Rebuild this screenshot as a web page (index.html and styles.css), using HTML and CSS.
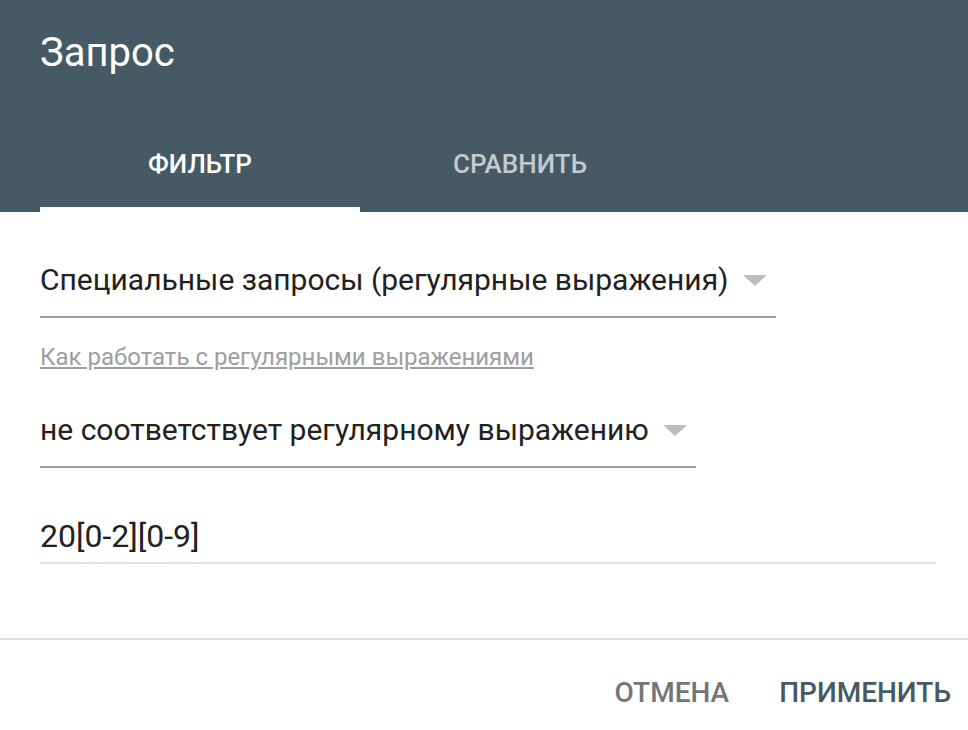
FILE: index.html
```html
<!DOCTYPE html>
<html lang="ru">
<head>
<meta charset="utf-8">
<link rel="stylesheet" href="styles.css">
</head>
<body>
<div class="dialog">
  <header class="head">
    <h1 class="title">Запрос</h1>
    <nav class="tabs">
      <div class="tab active">ФИЛЬТР</div>
      <div class="tab">СРАВНИТЬ</div>
    </nav>
  </header>
  <main class="body">
    <div class="select select-wide">
      <span class="select-text">Специальные запросы (регулярные выражения)</span>
      <span class="arrow"></span>
    </div>
    <a class="help" href="#">Как работать с регулярными выражениями</a>
    <div class="select select-narrow">
      <span class="select-text">не соответствует регулярному выражению</span>
      <span class="arrow"></span>
    </div>
    <div class="input">20[0-2][0-9]</div>
  </main>
  <footer class="actions">
    <button class="btn cancel">ОТМЕНА</button>
    <button class="btn apply">ПРИМЕНИТЬ</button>
  </footer>
</div>
</body>
</html>
```
FILE: styles.css
```css
html, body {
  margin: 0;
  padding: 0;
  background: #fff;
}
body {
  font-family: Roboto, "Noto Sans", sans-serif;
  width: 968px;
  height: 730px;
  overflow: hidden;
}
.dialog {
  display: flex;
  flex-direction: column;
}
.head {
  background: #455a64;
  height: 212px;
  display: flex;
  flex-direction: column;
  padding: 0 40px;
  box-sizing: border-box;
}
.title {
  margin: 0;
  padding-top: 29px;
  font-size: 40px;
  font-weight: 400;
  color: #fff;
  line-height: 48px;
}
.tabs {
  display: flex;
  margin-top: auto;
}
.tab {
  width: 320px;
  height: 100px;
  box-sizing: border-box;
  display: flex;
  align-items: center;
  justify-content: center;
  padding-top: 8px;
  font-size: 26px;
  font-weight: 500;
  color: rgba(255,255,255,0.7);
  border-bottom: 5px solid transparent;
}
.tab.active {
  color: #fff;
  border-bottom-color: #fff;
}
.body {
  padding: 0 32px 0 40px;
  display: flex;
  flex-direction: column;
  height: 428px;
  box-sizing: border-box;
  border-bottom: 2px solid #e0e0e0;
}
.select {
  display: flex;
  align-items: center;
  gap: 14px;
  border-bottom: 2px solid #9e9e9e;
  height: 68px;
  box-sizing: border-box;
  padding-bottom: 8px;
}
.select-wide {
  width: 736px;
  margin-top: 38px;
}
.select-narrow {
  width: 656px;
  margin-top: 29px;
}
.select-text {
  font-size: 30px;
  color: #212121;
}
.arrow {
  width: 0;
  height: 0;
  border-left: 12px solid transparent;
  border-right: 12px solid transparent;
  border-top: 11px solid #bdbdbd;
  margin-top: 2px;
}
.help {
  margin-top: 25px;
  font-size: 24px;
  color: #9e9e9e;
  text-decoration: underline;
  align-self: flex-start;
}
.input {
  margin-top: 49px;
  font-size: 32px;
  line-height: 38px;
  padding-bottom: 7px;
  color: #212121;
  border-bottom: 2px solid #e0e0e0;
  width: 896px;
}
.actions {
  display: flex;
  justify-content: flex-end;
  align-items: flex-start;
  gap: 50px;
  height: 90px;
  box-sizing: border-box;
  padding: 36px 17px 0 0;
}
.btn {
  background: none;
  border: 0;
  font-family: inherit;
  font-size: 28px;
  font-weight: 500;
  padding: 0;
  line-height: normal;
}
.cancel { color: #757575; }
.apply { color: #455a64; }
```
